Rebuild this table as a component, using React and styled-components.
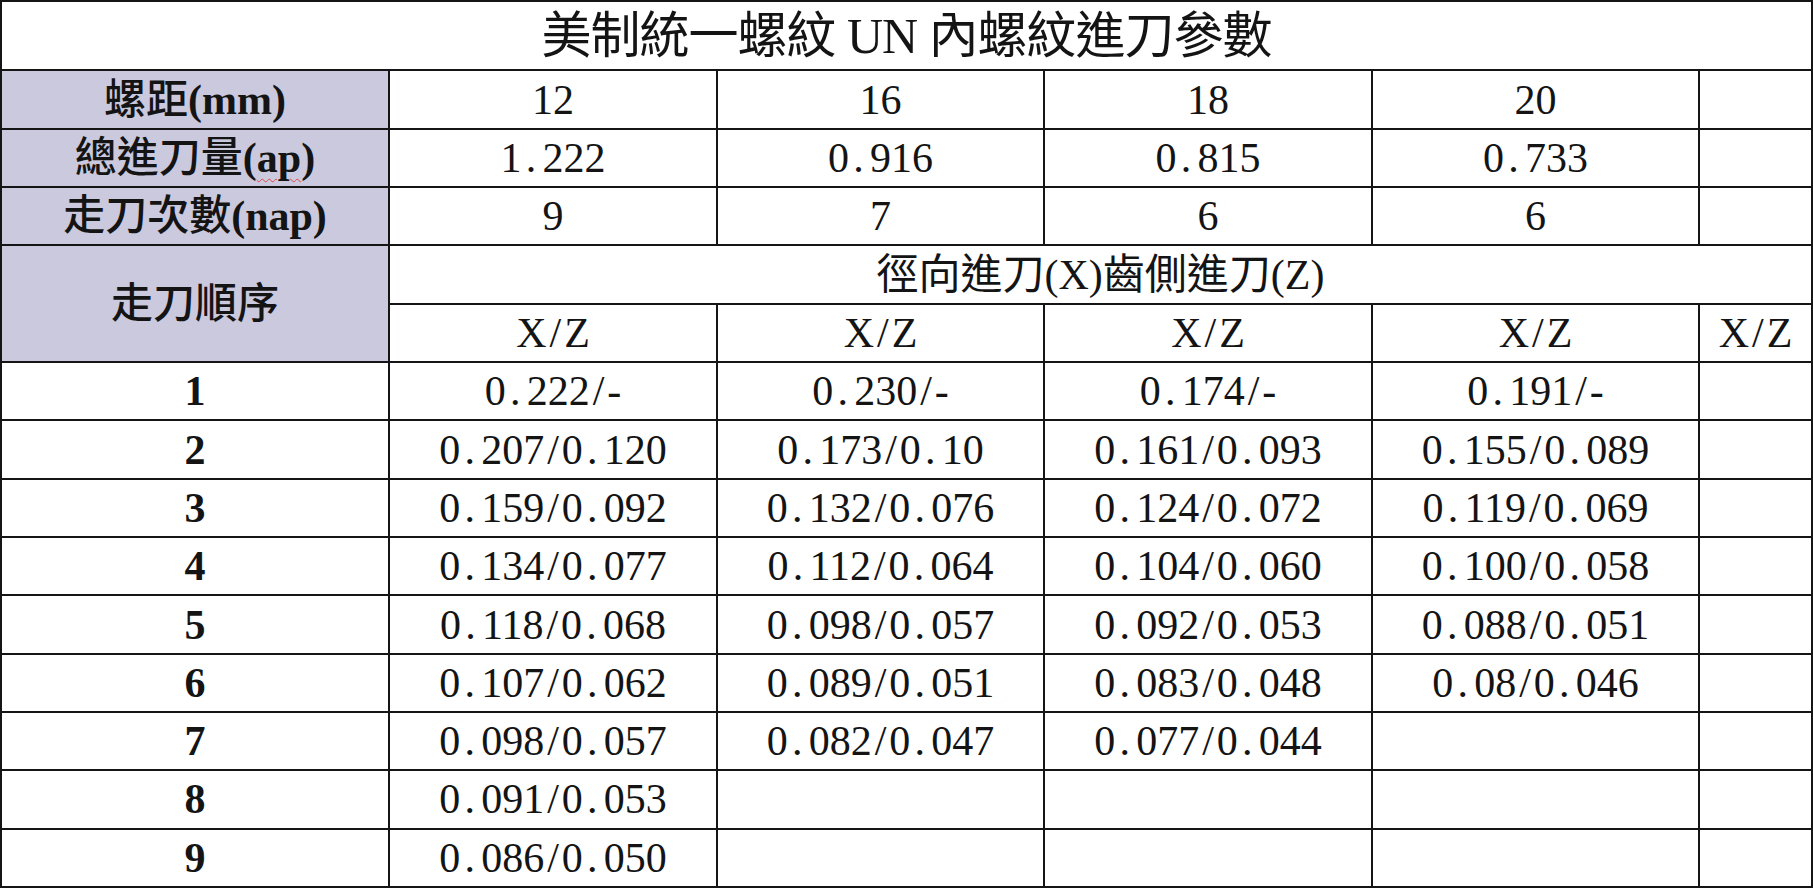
import React from "react";
import styled, { createGlobalStyle } from "styled-components";

const GlobalStyle = createGlobalStyle`
  html, body { margin: 0; padding: 0; background: #ffffff; }
  #root { width: 1813px; height: 888px; }
`;

const Sheet = styled.table`
  width: 1813px;
  height: 888px;
  table-layout: fixed;
  border-collapse: separate;
  border-spacing: 0;
  border-top: 2px solid #151515;
  border-left: 2px solid #151515;
  box-sizing: border-box;
  font-family: "Liberation Serif", "Noto Sans CJK TC", serif;
  color: #141414;
`;

const Col = styled.col`
  width: ${(p) => p.$w}px;
`;

const Row = styled.tr`
  height: ${(p) => p.$h}px;
`;

const Cell = styled.td`
  border-right: 2px solid #151515;
  border-bottom: 2px solid #151515;
  padding: 0;
  text-align: center;
  vertical-align: middle;
  font-size: 42px;
  line-height: 1;
  white-space: nowrap;
  background: ${(p) => (p.$shade ? "#cac9de" : "#ffffff")};
  font-weight: ${(p) => p.$weight || 400};
`;

const TitleCell = styled(Cell)`
  font-size: 50px;
  font-weight: 400;
  letter-spacing: -1px;
`;

const Latin = styled.span`
  font-weight: 700;
`;

const Dot = styled.span`
  display: inline-block;
  width: 0.5em;
  padding-left: 0.1em;
  box-sizing: border-box;
  text-align: left;
`;

const Slash = styled.span`
  display: inline-block;
  width: 0.42em;
  text-align: center;
`;

const Spell = styled.span`
  text-decoration: underline wavy #e04848;
  text-decoration-thickness: 1px;
  text-underline-offset: 6px;
`;

function Num({ v }) {
  if (!v) return null;
  const parts = v.split(/([./])/);
  return parts.map((p, i) => {
    if (p === ".") return <Dot key={i}>.</Dot>;
    if (p === "/") return <Slash key={i}>/</Slash>;
    return <React.Fragment key={i}>{p}</React.Fragment>;
  });
}

const pitches = ["12", "16", "18", "20", ""];
const totals = ["1.222", "0.916", "0.815", "0.733", ""];
const passes = ["9", "7", "6", "6", ""];

const data = [
  ["0.222/-", "0.230/-", "0.174/-", "0.191/-", ""],
  ["0.207/0.120", "0.173/0.10", "0.161/0.093", "0.155/0.089", ""],
  ["0.159/0.092", "0.132/0.076", "0.124/0.072", "0.119/0.069", ""],
  ["0.134/0.077", "0.112/0.064", "0.104/0.060", "0.100/0.058", ""],
  ["0.118/0.068", "0.098/0.057", "0.092/0.053", "0.088/0.051", ""],
  ["0.107/0.062", "0.089/0.051", "0.083/0.048", "0.08/0.046", ""],
  ["0.098/0.057", "0.082/0.047", "0.077/0.044", "", ""],
  ["0.091/0.053", "", "", "", ""],
  ["0.086/0.050", "", "", "", ""],
];

const widths = [388, 328, 327, 328, 327, 113];

export default function App() {
  return (
    <>
      <GlobalStyle />
      <Sheet>
        <colgroup>
          {widths.map((w, i) => (
            <Col key={i} $w={w} />
          ))}
        </colgroup>
        <tbody>
          <Row $h={69}>
            <TitleCell colSpan={6}>美制統一螺紋 UN 內螺紋進刀參數</TitleCell>
          </Row>
          <Row $h={58}>
            <Cell $shade $weight={500}>
              螺距<Latin>(mm)</Latin>
            </Cell>
            {pitches.map((v, i) => (
              <Cell key={i}>
                <Num v={v} />
              </Cell>
            ))}
          </Row>
          <Row $h={58}>
            <Cell $shade $weight={500}>
              總進刀量<Latin>(<Spell>ap</Spell>)</Latin>
            </Cell>
            {totals.map((v, i) => (
              <Cell key={i}>
                <Num v={v} />
              </Cell>
            ))}
          </Row>
          <Row $h={58}>
            <Cell $shade $weight={500}>
              走刀次數<Latin>(nap)</Latin>
            </Cell>
            {passes.map((v, i) => (
              <Cell key={i}>
                <Num v={v} />
              </Cell>
            ))}
          </Row>
          <Row $h={58}>
            <Cell $shade $weight={500} rowSpan={2}>
              走刀順序
            </Cell>
            <Cell colSpan={5}>徑向進刀(X)齒側進刀(Z)</Cell>
          </Row>
          <Row $h={58}>
            {[0, 1, 2, 3, 4].map((i) => (
              <Cell key={i}>
                <Num v="X/Z" />
              </Cell>
            ))}
          </Row>
          {data.map((row, r) => (
            <Row $h={58} key={r}>
              <Cell $weight={700}>{r + 1}</Cell>
              {row.map((v, i) => (
                <Cell key={i}>
                  <Num v={v} />
                </Cell>
              ))}
            </Row>
          ))}
        </tbody>
      </Sheet>
    </>
  );
}
